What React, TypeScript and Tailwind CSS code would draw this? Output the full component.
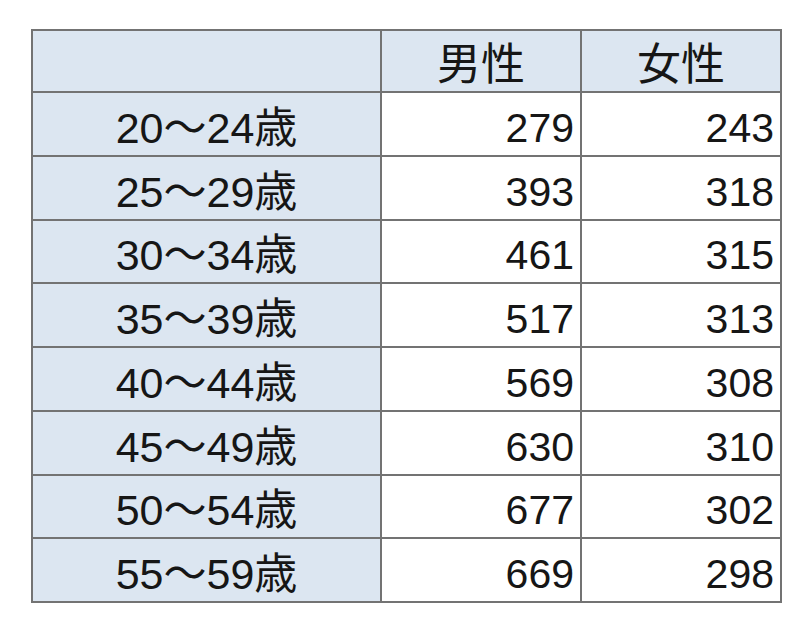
import React from "react";

const rows: [string, number, number][] = [
  ["20～24歳", 279, 243],
  ["25～29歳", 393, 318],
  ["30～34歳", 461, 315],
  ["35～39歳", 517, 313],
  ["40～44歳", 569, 308],
  ["45～49歳", 630, 310],
  ["50～54歳", 677, 302],
  ["55～59歳", 669, 298],
];

const heights = ["h-[62px]", "h-[62px]", "h-[61px]", "h-[62px]", "h-[62px]", "h-[62px]", "h-[61px]", "h-[62px]"];

export default function App() {
  return (
    <div
      className="w-[800px] h-[638px] bg-white pt-[29px] pl-[31px] text-[#161616]"
      style={{ fontFamily: '"Liberation Sans", "Noto Sans CJK JP", sans-serif' }}
    >
      <div className="w-[751px] bg-[#737373] p-[2px] grid grid-cols-[347px_198px_198px] gap-[2px] leading-none">
        <div className="h-[60px] bg-[#dce6f1]" />
        <div className="h-[60px] bg-[#dce6f1] flex items-center justify-center pt-[8px] text-[44px]">男性</div>
        <div className="h-[60px] bg-[#dce6f1] flex items-center justify-center pt-[8px] text-[44px]">女性</div>
        {rows.map(([label, m, f], i) => (
          <React.Fragment key={label}>
            <div className={`${heights[i]} bg-[#dce6f1] flex items-center justify-center pt-[8px] text-[43px]`}>{label}</div>
            <div className={`${heights[i]} bg-white flex items-center justify-end pr-[6px] pt-[8px] text-[41px]`}>{m}</div>
            <div className={`${heights[i]} bg-white flex items-center justify-end pr-[6px] pt-[8px] text-[41px]`}>{f}</div>
          </React.Fragment>
        ))}
      </div>
    </div>
  );
}
